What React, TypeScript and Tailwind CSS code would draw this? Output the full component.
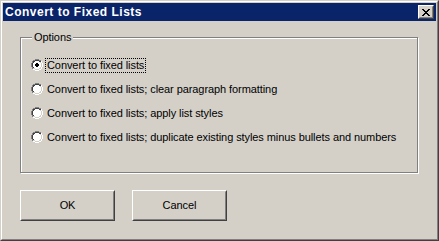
import React from "react";

/* ======================================================
   PIECES
====================================================== */

function Radio({ checked }: { checked?: boolean }) {
  return (
    <svg width="12" height="12" viewBox="0 0 12 12" className="shrink-0" shapeRendering="crispEdges">
      {/* outer shade: gray top-left, white bottom-right */}
      <path d="M4 0h4v1H4zM2 1h2v1H2zM8 1h2v1H8zM1 2h1v2H1zM0 4h1v4H0z" fill="#808080" />
      <path d="M10 2h1v2h-1zM11 4h1v4h-1zM10 8h1v2h-1zM8 10h2v1H8zM4 11h4v1H4zM2 10h2v1H2z" fill="#ffffff" />
      <path d="M1 8h1v2H1z" fill="#808080" />
      {/* inner shade: dark top-left, light bottom-right */}
      <path d="M4 1h4v1H4zM2 2h2v1H2zM8 2h2v1H8zM2 3h1v1H2zM1 4h1v4H1zM2 8h1v1H2z" fill="#404040" />
      <path d="M9 3h1v1H9zM10 4h1v4h-1zM9 8h1v1H9zM8 9h2v1H8zM4 10h4v1H4zM2 9h2v1H2z" fill="#d4d0c8" />
      {/* well */}
      <path d="M4 2h4v1h1v1h1v4h-1v1H8v1H4V9H3V8H2V4h1V3h1z" fill="#ffffff" />
      {checked && <path d="M5 4h2v1h1v2H7v1H5V7H4V5h1z" fill="#000000" />}
    </svg>
  );
}

function Button({ label }: { label: string }) {
  return (
    <div className="w-[95px] h-[31px] border border-t-white border-l-white border-r-[#404040] border-b-[#404040] bg-[#d4d0c8]">
      <div className="h-full w-full border border-t-[#d4d0c8] border-l-[#d4d0c8] border-r-[#808080] border-b-[#808080] flex items-center justify-center text-black">
        {label}
      </div>
    </div>
  );
}

const OPTIONS = [
  "Convert to fixed lists",
  "Convert to fixed lists; clear paragraph formatting",
  "Convert to fixed lists; apply list styles",
  "Convert to fixed lists; duplicate existing styles minus bullets and numbers",
];

/* ======================================================
   DIALOG
====================================================== */

export default function App() {
  return (
    <div
      className="w-[439px] h-[241px] bg-[#d4d0c8] border border-t-[#d4d0c8] border-l-[#d4d0c8] border-r-[#404040] border-b-[#404040] text-[11px] leading-none tracking-[-0.08px] text-black"
      style={{ fontFamily: '"Liberation Sans", Arial, sans-serif' }}
    >
      <div className="h-full w-full border border-t-white border-l-white border-r-[#808080] border-b-[#808080] p-[1px] flex flex-col">
        {/* TITLE BAR */}
        <div className="h-[18px] bg-[#0a246a] flex items-center justify-between pl-[2px] pr-[2px]">
          <span className="text-white font-bold text-[12px] tracking-[0.5px]">Convert to Fixed Lists</span>
          <div className="w-[16px] h-[14px] border border-t-white border-l-white border-r-[#404040] border-b-[#404040] bg-[#d4d0c8]">
            <div className="h-full w-full border border-t-[#d4d0c8] border-l-[#d4d0c8] border-r-[#808080] border-b-[#808080] flex items-center justify-center">
              <svg width="8" height="7" viewBox="0 0 8 7" shapeRendering="crispEdges">
                <path
                  d="M0 0h2v1H0zM6 0h2v1H6zM1 1h2v1H1zM5 1h2v1H5zM2 2h4v1H2zM3 3h2v1H3zM2 4h4v1H2zM1 5h2v1H1zM5 5h2v1H5zM0 6h2v1H0zM6 6h2v1H6z"
                  fill="#000"
                />
              </svg>
            </div>
          </div>
        </div>

        {/* GROUP BOX */}
        <div className="relative ml-[17px] mt-[16px] w-[398px] h-[136px] border border-[#808080] shadow-[inset_1px_1px_0_#ffffff,1px_1px_0_#ffffff] pt-[15px] pl-[10px]">
          <span className="absolute left-[11px] top-[-6px] bg-[#d4d0c8] px-[2px]">Options</span>

          {OPTIONS.map((label, i) => (
            <div key={label} className="h-[24px] flex items-center gap-[2px]">
              <Radio checked={i === 0} />
              <span
                className={
                  i === 0
                    ? "border border-dotted border-black px-[1px] py-[1px] whitespace-nowrap"
                    : "border border-transparent px-[1px] py-[1px] whitespace-nowrap"
                }
              >
                {label}
              </span>
            </div>
          ))}
        </div>

        {/* BOTÕES */}
        <div className="ml-[17px] mt-[17px] flex gap-[17px]">
          <Button label="OK" />
          <Button label="Cancel" />
        </div>
      </div>
    </div>
  );
}
